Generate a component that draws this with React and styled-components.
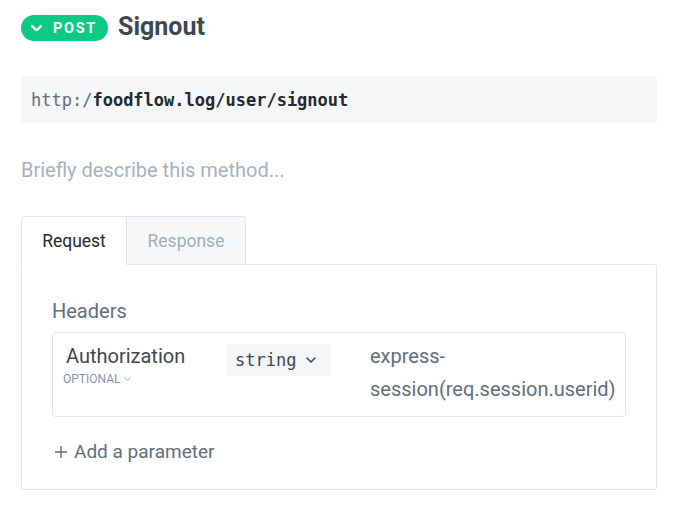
import React from "react";
import styled, { createGlobalStyle } from "styled-components";

const Global = createGlobalStyle`
  html, body { margin: 0; padding: 0; background: #fff; }
  body { font-family: Roboto, "Liberation Sans", sans-serif; }
  * { box-sizing: border-box; }
`;

const Page = styled.div`
  padding: 15px 18px 16px 21px;
`;

const Header = styled.div`
  display: flex;
  align-items: center;
  gap: 10px;
  height: 26px;
`;

const Badge = styled.div`
  display: flex;
  align-items: center;
  height: 26px;
  padding: 0 11px 0 10px;
  border-radius: 13px;
  background: #0cc984;
  color: #fff;
  font-family: Roboto, sans-serif;
  font-weight: 700;
  font-size: 14.5px;
  letter-spacing: 1.7px;
  gap: 11px;
`;

const Title = styled.h1`
  margin: 0;
  font-size: 25px;
  font-weight: 700;
  color: #3d4852;
  line-height: 26px;
  position: relative;
  top: -1px;
`;

const UrlBox = styled.div`
  margin-top: 35px;
  height: 47px;
  background: #f5f6f8;
  border-radius: 3px;
  display: flex;
  align-items: center;
  padding-left: 10px;
  font-family: "DejaVu Sans Mono", monospace;
  font-size: 17px;
`;

const UrlBase = styled.span`
  color: #606f7b;
`;

const UrlPath = styled.span`
  color: #22292f;
  font-weight: 700;
`;

const Description = styled.div`
  margin-top: 35px;
  font-size: 20px;
  line-height: 24px;
  color: #a5b1bc;
`;

const Tabs = styled.div`
  margin-top: 34px;
  display: flex;
`;

const Tab = styled.div`
  height: 49px;
  display: flex;
  align-items: center;
  justify-content: center;
  width: ${(p) => p.$w}px;
  font-size: 17.5px;
  border: 1px solid #e1e6eb;
  border-left: ${(p) => (p.$active ? "1px solid #e1e6eb" : "none")};
  border-radius: ${(p) => (p.$active ? "3px 0 0 0" : "0 3px 0 0")};
  border-bottom: ${(p) => (p.$active ? "1px solid #fff" : "1px solid #e1e6eb")};
  background: ${(p) => (p.$active ? "#fff" : "#f5f7f9")};
  color: ${(p) => (p.$active ? "#22292f" : "#a0adb8")};
  margin-bottom: -1px;
  position: relative;
  z-index: 1;
`;

const Panel = styled.div`
  border: 1px solid #e1e6eb;
  border-radius: 0 3px 3px 3px;
  padding: 33px 30px 25px 30px;
`;

const SectionLabel = styled.div`
  font-size: 20px;
  line-height: 26px;
  color: #606f7b;
`;

const ParamBox = styled.div`
  margin-top: 8px;
  border: 1px solid #e1e6eb;
  border-radius: 4px;
  padding: 10px 12px 10px 13px;
  display: grid;
  grid-template-columns: 161px 143px 254px;
  height: 85px;
`;

const NameCol = styled.div`
  display: flex;
  flex-direction: column;
  padding-top: 1px;
`;

const Name = styled.div`
  font-size: 20px;
  line-height: 24px;
  color: #3d4852;
`;

const Optional = styled.div`
  display: flex;
  align-items: center;
  gap: 4px;
  font-size: 12px;
  color: #8795a1;
  margin-left: -3px;
  margin-top: 4px;
`;

const TypeSelect = styled.div`
  width: 104px;
  height: 32px;
  margin-top: 1px;
  background: #f5f6f8;
  border-radius: 3px;
  display: flex;
  align-items: center;
  padding-left: 8px;
  gap: 10px;
  font-family: "DejaVu Sans Mono", monospace;
  font-size: 17px;
  color: #3d4852;
`;

const ParamDesc = styled.div`
  font-size: 20px;
  line-height: 33px;
  color: #606f7b;
  margin-top: -3px;
`;

const AddParam = styled.div`
  margin-top: 23px;
  display: flex;
  align-items: center;
  gap: 6px;
  font-size: 19px;
  line-height: 24px;
  color: #606f7b;
  margin-left: 2px;
`;

const Chevron = ({ size = 10, color = "currentColor", width = 2 }) => (
  <svg width={size} height={size * 0.6} viewBox="0 0 10 6" fill="none">
    <path d="M1 1l4 4 4-4" stroke={color} strokeWidth={width} strokeLinecap="round" strokeLinejoin="round" />
  </svg>
);

const Plus = () => (
  <svg width="14" height="14" viewBox="0 0 14 14" fill="none">
    <path d="M7 1v12M1 7h12" stroke="#606f7b" strokeWidth="1.4" />
  </svg>
);

export default function App() {
  return (
    <>
      <Global />
      <Page>
        <Header>
          <Badge>
            <Chevron size={11} width={2} />
            <span>POST</span>
          </Badge>
          <Title>Signout</Title>
        </Header>
        <UrlBox>
          <UrlBase>http:/</UrlBase>
          <UrlPath>foodflow.log/user/signout</UrlPath>
        </UrlBox>
        <Description>Briefly describe this method...</Description>
        <Tabs>
          <Tab $active $w={106}>Request</Tab>
          <Tab $w={119}>Response</Tab>
        </Tabs>
        <Panel>
          <SectionLabel>Headers</SectionLabel>
          <ParamBox>
            <NameCol>
              <Name>Authorization</Name>
              <Optional>
                OPTIONAL <Chevron size={7} width={1.2} />
              </Optional>
            </NameCol>
            <div>
              <TypeSelect>
                string <Chevron size={10} width={1.6} />
              </TypeSelect>
            </div>
            <ParamDesc>express-session(req.session.userid)</ParamDesc>
          </ParamBox>
          <AddParam>
            <Plus />
            Add a parameter
          </AddParam>
        </Panel>
      </Page>
    </>
  );
}
